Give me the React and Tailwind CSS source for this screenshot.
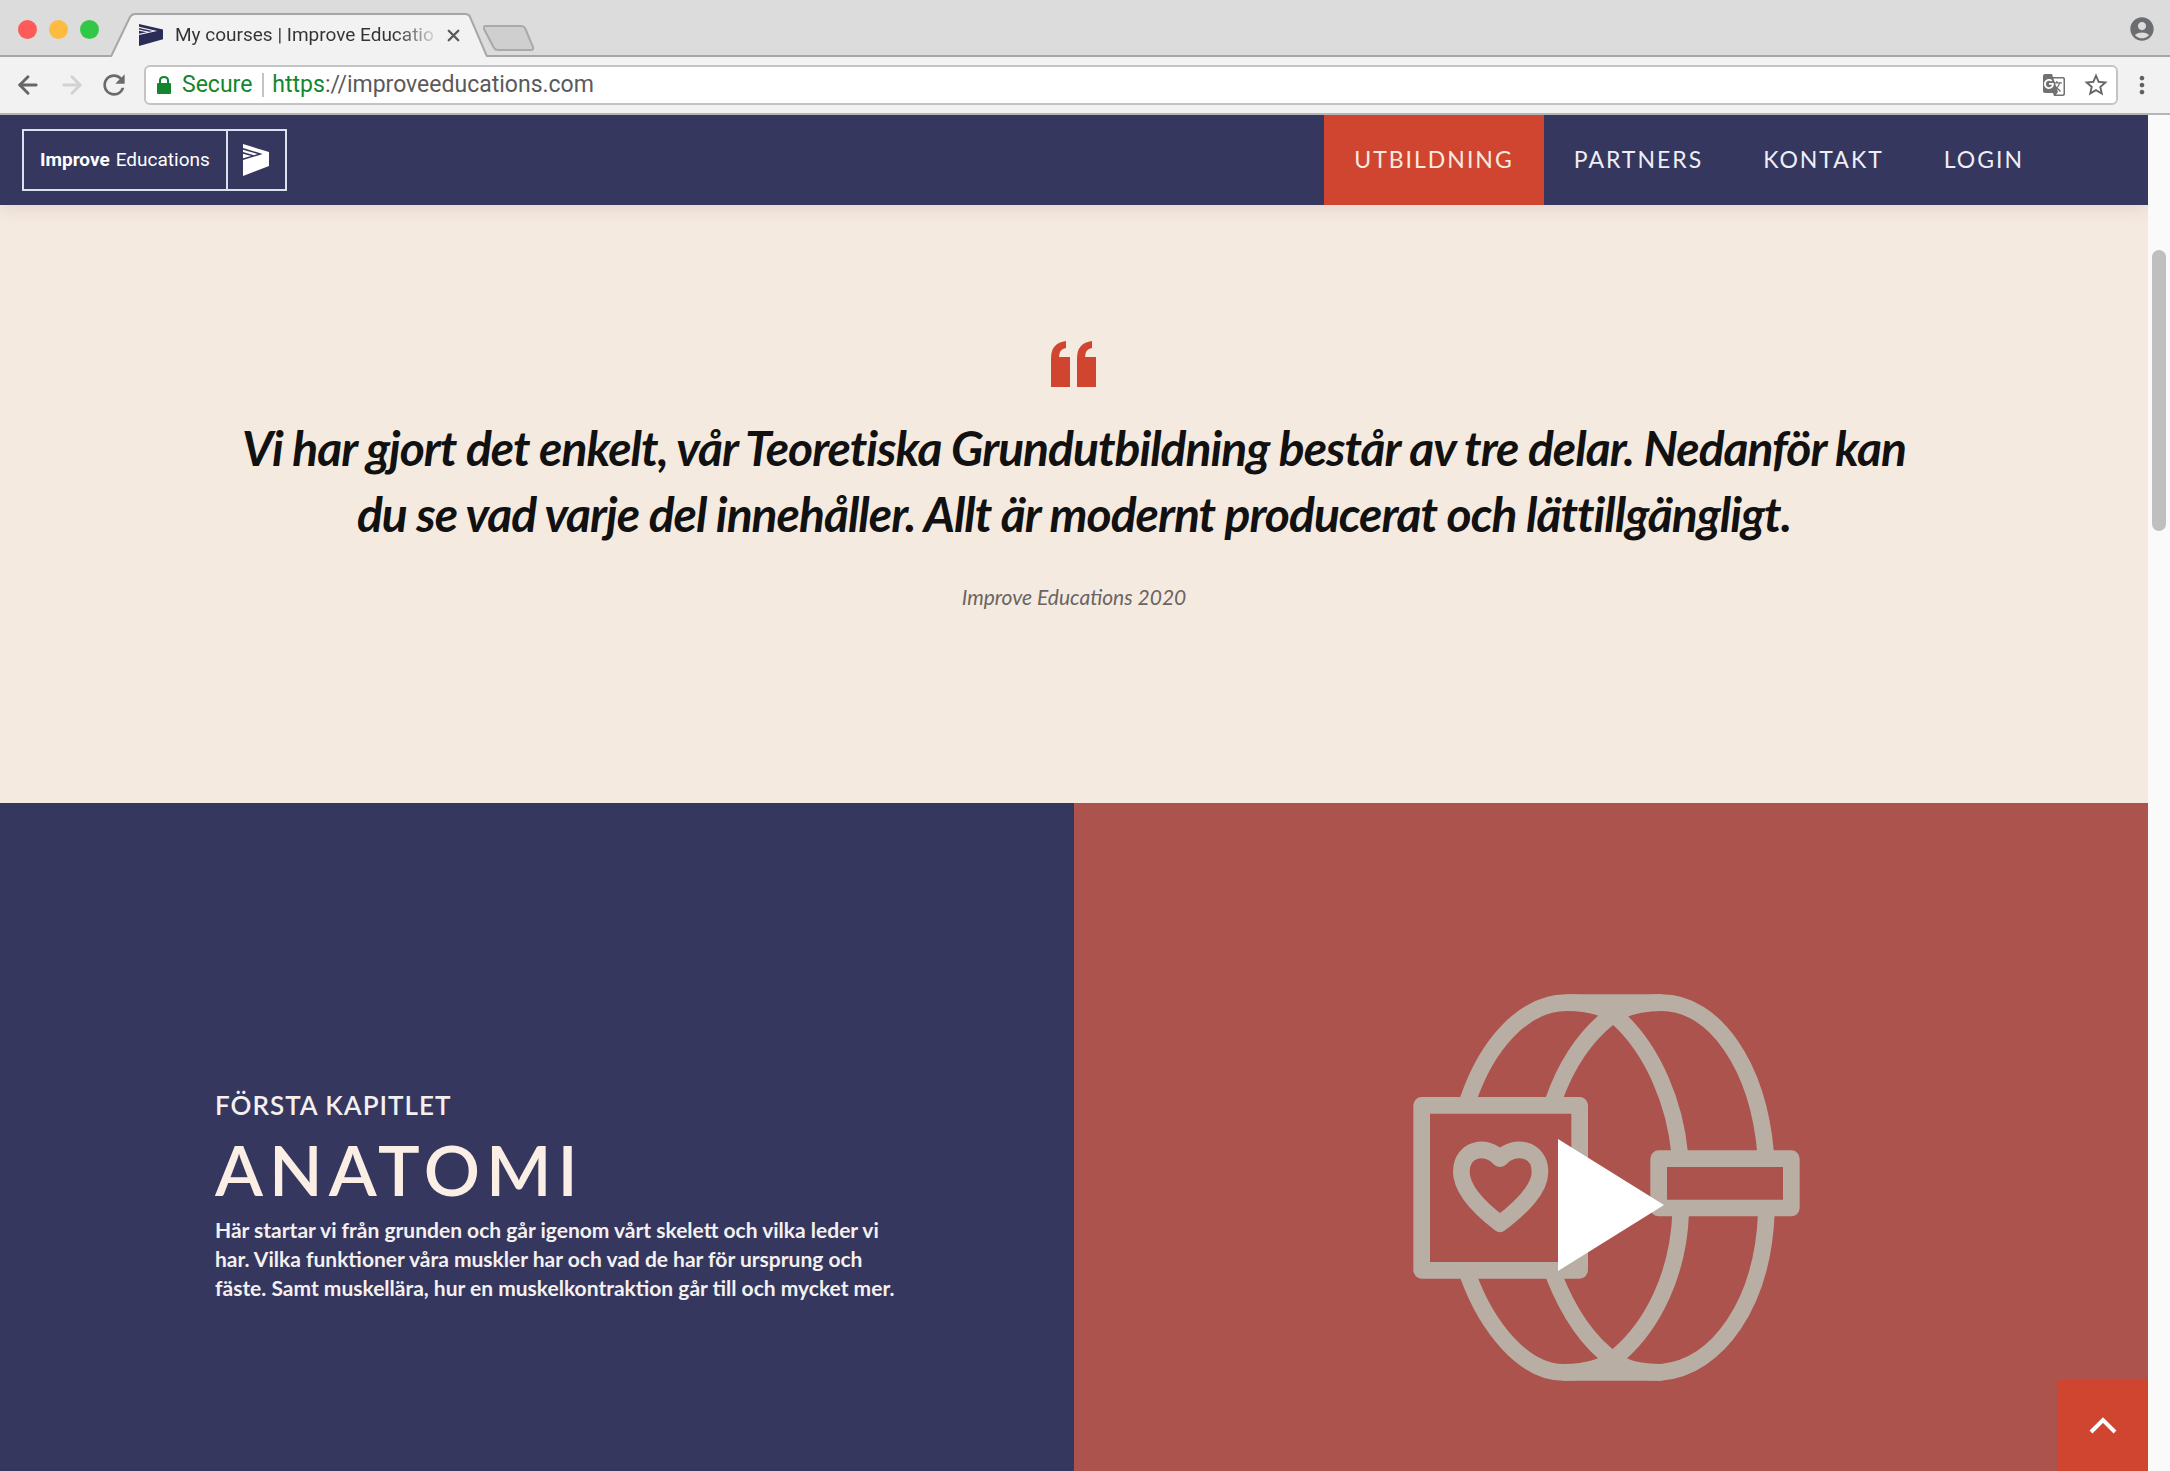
import { ArrowLeft, ArrowRight, X } from 'lucide-react';
import { MdAccountCircle, MdGTranslate, MdMoreVert, MdRefresh, MdStarBorder } from 'react-icons/md';

const navItems = [
  { label: 'UTBILDNING', active: true },
  { label: 'PARTNERS' },
  { label: 'KONTAKT' },
  { label: 'LOGIN' },
];

const Mark = ({ className }) => (
  <svg viewBox="0 0 66 96" preserveAspectRatio="none" className={className} fill="currentColor" aria-hidden="true">
    <path d="M0 0 66 24V66L0 96V48L50 30 0 12Z" />
    <path d="M0 17 37 30 28 34 0 24Z" />
    <path d="M0 29 21 36 0 43Z" />
  </svg>
);

const Padlock = () => (
  <svg width="14" height="20" viewBox="0 0 14 20" className="mx-[3px] shrink-0" aria-hidden="true">
    <path d="M3 9V5.500Q3 2 7 2T11 5.500V9" fill="none" stroke="#13862f" strokeWidth="2" />
    <rect y="8" width="14" height="11" rx="1" fill="#13862f" />
  </svg>
);

const Tab = () => (
  <div className="relative flex h-[44px] w-[376px] items-center pl-7 pr-6">
    <svg viewBox="0 0 376 44" className="absolute inset-0 h-full w-full" aria-hidden="true">
      <path d="M0 44 19 4Q21 1 24 1H354Q358 1 359 4L376 44Z" fill="#f2f2f2" />
      <path d="M0 43.500 19 4Q21 1 24 1H354Q358 1 359 4L376 43.500" fill="none" stroke="#a6a6a6" strokeWidth="2" />
    </svg>
    <Mark className="relative h-[22px] w-6 shrink-0 text-[#2a2d58]" />
    <span className="relative ml-3 whitespace-nowrap bg-gradient-to-r from-[#333] from-85% to-[#d5d5d5] bg-clip-text text-[19px] text-transparent">
      My courses | Improve Educatio
    </span>
    <button aria-label="Close tab" className="relative ml-auto shrink-0 text-[#5a5a5a]">
      <X size={19} strokeWidth={3} />
    </button>
  </div>
);

const BrowserChrome = () => (
  <header className="shrink-0 font-[Roboto,sans-serif]">
    <div className="flex h-[57px] items-end border-b-2 border-[#a6a6a6] bg-[#dcdcdc] pl-[18px] pr-3.5">
      <div className="flex gap-3 self-center pt-1">
        <span className="size-[19px] rounded-full bg-[#fc5b57]" />
        <span className="size-[19px] rounded-full bg-[#fdbc40]" />
        <span className="size-[19px] rounded-full bg-[#33c748]" />
      </div>
      <div className="-mb-0.5 ml-3">
        <Tab />
      </div>
      <button aria-label="New tab" className="mb-1 -ml-1">
        <svg width="52" height="26" viewBox="0 0 52 26">
          <path d="M3 1H38Q41 1 42 3L50 22Q51 25 48 25H15Q12 25 11 23L1 4Q0 1 3 1Z" fill="#cfcfcf" stroke="#a9a9a9" strokeWidth="2" />
        </svg>
      </button>
      <button aria-label="Account" className="ml-auto self-center pt-0.5 text-[#6b6e70]">
        <MdAccountCircle size={28} />
      </button>
    </div>
    <div className="flex h-[58px] items-center border-b-2 border-[#b5b5b5] bg-[#f2f2f2] pl-3.5 pr-3.5">
      <button aria-label="Back" className="text-[#666]">
        <ArrowLeft size={28} strokeWidth={2.5} />
      </button>
      <button aria-label="Forward" className="ml-4 text-[#d2d2d2]">
        <ArrowRight size={28} strokeWidth={2.5} />
      </button>
      <button aria-label="Reload" className="ml-3 text-[#6b6b6b]">
        <MdRefresh size={32} />
      </button>
      <div className="ml-3.5 flex h-10 flex-1 items-center rounded-md border-2 border-[#c4c4c4] bg-white pl-2 pr-1.5 text-[23px]">
        <Padlock />
        <span className="ml-2 text-[#13862f]">Secure</span>
        <span className="ml-2.5 h-6 w-0.5 bg-[#c4c4c4]" />
        <div className="ml-2 flex-1 text-[#5a5a5a]">
          <span className="text-[#13862f]">https</span>://improveeducations.com
        </div>
        <button aria-label="Translate" className="text-[#717171]">
          <MdGTranslate size={24} />
        </button>
        <button aria-label="Bookmark" className="ml-4 text-[#666]">
          <MdStarBorder size={28} />
        </button>
      </div>
      <button aria-label="Menu" className="ml-2.5 text-[#5f5f5f]">
        <MdMoreVert size={28} />
      </button>
    </div>
  </header>
);

const SiteNav = () => (
  <nav className="relative z-10 flex h-[90px] items-stretch justify-between bg-[#35375f] pl-[22px] pr-[94px] shadow-[0_4px_16px_rgba(80,50,40,0.1)]">
    <a href="#" className="my-auto flex h-[62px] items-stretch border-2 border-[#dfe0ee] text-white">
      <span className="flex items-center px-4 font-[Roboto,sans-serif] text-[19px]">
        <b className="mr-1.5">Improve</b>Educations
      </span>
      <span className="flex w-[59px] items-center justify-center border-l-2 border-[#dfe0ee]">
        <Mark className="h-8 w-[26px]" />
      </span>
    </a>
    <div className="flex">
      {navItems.map((item) => (
        <a
          key={item.label}
          href="#"
          className={`flex items-center px-[30px] pb-0.5 text-[23px] tracking-[2px] ${item.active ? 'bg-[#cf4530] text-[#fbe9e2]' : 'text-[#eeeef6]'}`}
        >
          {item.label}
        </a>
      ))}
    </div>
  </nav>
);

const Quote = () => (
  <section className="flex h-[598px] flex-col items-center bg-[#f5eae0] px-[200px] pt-[136px] text-center italic">
    <svg width="48" height="46" viewBox="0 0 48 46" fill="#cf4530" aria-hidden="true">
      <path d="M1 46V17Q1 2 16 0V7Q9 8 9 16H20V46Z" />
      <path d="M27 46V17Q27 2 42 0V7Q35 8 35 16H46V46Z" />
    </svg>
    <blockquote className="mt-7 max-w-[1720px] text-5xl/[66px] font-bold tracking-[-1px] text-[#111]">
      Vi har gjort det enkelt, vår Teoretiska Grundutbildning består av tre delar. Nedanför kan du se vad varje del innehåller. Allt är modernt producerat och lättillgängligt.
    </blockquote>
    <p className="mt-9 text-[21px]/7 text-[#6a6562]">Improve Educations 2020</p>
  </section>
);

const BandDrawing = () => (
  <svg viewBox="0 0 1074 804" className="h-full w-full" aria-hidden="true">
    <g transform="translate(316 167) scale(.33333)" fill="none" stroke="#b9aea4" strokeWidth="50" strokeLinejoin="round">
      <path d="M234 390C290 225 400 98 530 98H815C975 98 1105 290 1127 550" />
      <path d="M491 390C530 280 590 195 660 140C700 112 750 98 815 98M530 98C610 98 650 115 690 150C790 245 855 400 869 550" />
      <path d="M234 915C290 1070 400 1207 520 1207H815C985 1190 1118 1000 1129 730" />
      <path d="M491 915C540 1040 600 1120 670 1170C710 1198 750 1207 815 1207M520 1207C600 1207 650 1190 685 1155C790 1065 865 910 872 730" />
      <rect x="95" y="406" width="474" height="495" />
      <rect x="806" y="566" width="398" height="148" />
      <path d="M330 761C270 715 214 660 214 605C214 535 290 520 330 566C370 520 450 535 450 605C450 660 390 715 330 761Z" />
    </g>
  </svg>
);

const Chapter = () => (
  <section className="grid h-[804px] shrink-0 grid-cols-2">
    <div className="flex flex-col justify-center bg-[#35375f] px-[215px] pb-5 text-[#f4f0f0]">
      <h3 className="text-[26px]/8 font-semibold tracking-[1px]">FÖRSTA KAPITLET</h3>
      <h2 className="mt-1.5 text-[70px]/[84px] font-semibold tracking-[6px] text-[#fbeee4]">ANATOMI</h2>
      <p className="mt-1 w-[700px] text-[21px]/[29px] font-bold">
        Här startar vi från grunden och går igenom vårt skelett och vilka leder vi har. Vilka funktioner våra muskler har och vad de har för ursprung och fäste. Samt muskellära, hur en muskelkontraktion går till och mycket mer.
      </p>
    </div>
    <div className="relative bg-[#ab534c]">
      <BandDrawing />
      <button aria-label="Play video" className="absolute inset-0 flex items-center justify-center">
        <svg width="106" height="132" viewBox="0 0 106 132" fill="#fff">
          <path d="M0 0 106 66 0 132Z" />
        </svg>
      </button>
    </div>
  </section>
);

export default function App() {
  return (
    <div className="flex h-screen flex-col overflow-hidden bg-white">
      <BrowserChrome />
      <div className="flex min-h-0 flex-1">
        <div className="relative min-w-0 flex-1 overflow-hidden font-[Lato,sans-serif]">
          <SiteNav />
          <Quote />
          <Chapter />
          <button aria-label="Back to top" className="absolute bottom-0 right-0 flex h-[91px] w-[91px] items-center justify-center bg-[#cf4530]">
            <svg width="28" height="18" viewBox="0 0 28 18" fill="none" stroke="#fff" strokeWidth="4">
              <path d="M2 15 14 3 26 15" />
            </svg>
          </button>
        </div>
        <div className="w-[22px] bg-[#fafafa] px-1 pt-[135px]">
          <div className="h-[281px] rounded-full bg-[#bfbfbf]" />
        </div>
      </div>
    </div>
  );
}
